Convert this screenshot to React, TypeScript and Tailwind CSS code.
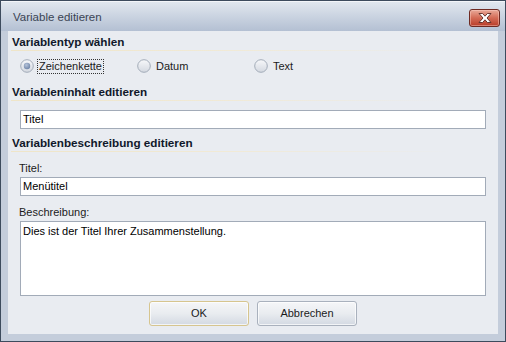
import React from "react"

const font = { fontFamily: '"Liberation Sans", Arial, sans-serif' }

function Header({ children }: { children: React.ReactNode }) {
  return (
    <div>
      <div className="h-[16px] pl-[4px] text-[11.7px] font-bold leading-[16px] text-[#10182a]">{children}</div>
      <div className="ml-[3px] h-px w-[440px] bg-gradient-to-r from-[#efe5c8] via-[#f1ead6] to-transparent" />
    </div>
  )
}

function Radio({ label, checked, focused }: { label: string; checked?: boolean; focused?: boolean }) {
  return (
    <div className="flex w-[117px] items-center">
      <svg width="14" height="14" viewBox="0 0 14 14" className="shrink-0">
        <defs>
          <linearGradient id={`rg-${label}`} x1="0" y1="0" x2="0" y2="1">
            <stop offset="0" stopColor="#f7f8fa" />
            <stop offset="1" stopColor="#d3d8e0" />
          </linearGradient>
          <radialGradient id={`dot-${label}`} cx="0.4" cy="0.35" r="0.7">
            <stop offset="0" stopColor="#b6c4da" />
            <stop offset="1" stopColor="#6d83a6" />
          </radialGradient>
        </defs>
        <circle cx="7" cy="7" r="6.3" fill={`url(#rg-${label})`} stroke="#a3acb9" strokeWidth="1" />
        {checked && <circle cx="7" cy="7" r="3.2" fill={`url(#dot-${label})`} />}
      </svg>
      <span
        className={`ml-[4px] px-px text-[11px] leading-[13px] text-[#1b1b1b] ${
          focused ? "outline outline-1 outline-dotted outline-[#333]" : ""
        }`}
      >
        {label}
      </span>
    </div>
  )
}

function Field({ value }: { value: string }) {
  return (
    <div className="ml-[12px] flex h-[19px] w-[466px] items-center border border-[#a2abb8] bg-white pl-[2px] text-[11px] text-black">
      {value}
    </div>
  )
}

function Btn({ label, isDefault }: { label: string; isDefault?: boolean }) {
  return (
    <button
      className={`flex h-[25px] w-[100px] items-center justify-center rounded-[3px] border bg-gradient-to-b from-[#f5f6f8] via-[#e9ecf0] to-[#d3d9e2] text-[11px] text-[#1b1b1b] shadow-[inset_0_0_0_1px_rgba(255,255,255,0.7)] ${
        isDefault ? "border-[#d6c58f]" : "border-[#a9b1bd]"
      }`}
    >
      {label}
    </button>
  )
}

export default function App() {
  return (
    <div className="h-[342px] w-[506px] bg-[#3d4b5d] p-px" style={font}>
      <div className="flex h-full flex-col bg-[#c4cddb]">
        {/* Title bar */}
        <div className="flex h-[30px] shrink-0 justify-between bg-gradient-to-b from-[#e2e8ef] to-[#b4c0d3] shadow-[inset_0_1px_0_rgba(255,255,255,0.6)]">
          <span className="pl-[12px] pt-[8px] text-[11.5px] leading-[16px] text-[#3a4454]">Variable editieren</span>
          <div className="mr-[5px] mt-[8px] flex h-[18px] w-[31px] items-center justify-center rounded-[3px] border border-[#6e2a22] bg-gradient-to-b from-[#e8a999] via-[#d36a55] to-[#b83b27] shadow-[inset_0_0_0_1px_rgba(255,210,200,0.45)]">
            <svg width="16" height="12" viewBox="0 0 16 12">
              <path
                d="M2 1.5 L5.6 1.5 L8 4.2 L10.4 1.5 L14 1.5 L10 6 L14 10.5 L10.4 10.5 L8 7.8 L5.6 10.5 L2 10.5 L6 6 Z"
                fill="#fff"
                stroke="#5b2a24"
                strokeWidth="0.9"
                strokeLinejoin="round"
              />
            </svg>
          </div>
        </div>

        {/* Body */}
        <div className="flex flex-1 px-[7px] pb-[7px]">
          <div className="flex flex-1 flex-col bg-[#e9ecf1] pt-[3px]">
            <Header>Variablentyp wählen</Header>

            <div className="mt-[7px] flex h-[16px] items-center pl-[12px]">
              <Radio label="Zeichenkette" checked focused />
              <Radio label="Datum" />
              <Radio label="Text" />
            </div>

            <div className="mt-[10px]">
              <Header>Variableninhalt editieren</Header>
            </div>

            <div className="mt-[9px]">
              <Field value="Titel" />
            </div>

            <div className="mt-[6px]">
              <Header>Variablenbeschreibung editieren</Header>
            </div>

            <div className="mt-[9px] h-[14px] pl-[11px] text-[11px] leading-[14px] text-[#1b1b1b]">Titel:</div>
            <div className="mt-[2px]">
              <Field value="Menütitel" />
            </div>

            <div className="mt-[9px] h-[14px] pl-[11px] text-[11px] leading-[14px] text-[#1b1b1b]">Beschreibung:</div>
            <div className="ml-[12px] mt-[2px] h-[75px] w-[466px] border border-[#a2abb8] bg-white pl-[2px] pt-[2px] text-[11px] leading-[14px] text-black">
              Dies ist der Titel Ihrer Zusammenstellung.
            </div>

            <div className="mt-[5px] flex justify-center gap-[8px]">
              <Btn label="OK" isDefault />
              <Btn label="Abbrechen" />
            </div>
          </div>
        </div>
      </div>
    </div>
  )
}
